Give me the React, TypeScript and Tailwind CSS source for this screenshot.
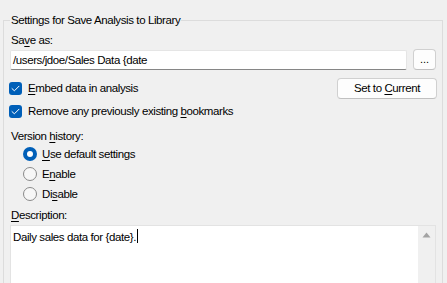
import React from "react";

const font = { fontFamily: '"Liberation Sans", Arial, sans-serif' };

function U({ children }: { children: React.ReactNode }) {
  return <span className="underline underline-offset-[2px] decoration-[1px]">{children}</span>;
}

function Check() {
  return (
    <span className="flex h-[13px] w-[13px] shrink-0 items-center justify-center rounded-[3px] bg-[#005fb8]">
      <svg width="9" height="7" viewBox="0 0 9 7" fill="none">
        <path d="M1 3.6 L3.4 5.8 L8 1.2" stroke="white" strokeWidth="1" strokeLinecap="round" strokeLinejoin="round" />
      </svg>
    </span>
  );
}

function Radio({ on }: { on?: boolean }) {
  return on ? (
    <span className="flex h-[14px] w-[14px] shrink-0 items-center justify-center rounded-full bg-[#005fb8]">
      <span className="h-[6px] w-[6px] rounded-full bg-white" />
    </span>
  ) : (
    <span className="h-[14px] w-[14px] shrink-0 rounded-full border border-[#8a8a8a] bg-[#f7f7f7]" />
  );
}

export default function App() {
  return (
    <div
      className="h-[283px] w-[447px] overflow-hidden bg-[#f0f0f0] pl-[3px] pt-[12px] text-[11.5px] leading-[16px] tracking-[-0.4px] text-black"
      style={font}
    >
      <fieldset className="h-[300px] w-[440px] border border-[#dcdcdc] pl-[6px] pr-[5px]">
        <legend className="px-[1px]">Settings for Save Analysis to Library</legend>
        <div className="mt-[4px] pl-[1px]">
          Sa<U>v</U>e as:
        </div>
        <div className="mt-[1px] flex items-center gap-[6px]">
          <div className="flex h-[20px] w-[397px] items-center rounded-[2px] border border-[#e5e5e5] border-b-[#868686] bg-white pl-[2px]">
            <span>/users/jdoe/Sales Data {"{"}date</span>
          </div>
          <div className="flex h-[21px] w-[23px] items-center justify-center rounded-[4px] border border-[#d0d0d0] border-b-[#c0c0c0] bg-[#fdfdfd] pb-[2px] text-[11px] tracking-normal">
            ...
          </div>
        </div>
        <div className="mt-[8px] flex h-[20px] items-center justify-between">
          <div className="-ml-[1px] flex items-center gap-[6px]">
            <Check />
            <span>
              <U>E</U>mbed data in analysis
            </span>
          </div>
          <div className="flex h-[21px] w-[100px] items-center justify-center rounded-[4px] border border-[#d0d0d0] border-b-[#c0c0c0] bg-[#fdfdfd]">
            <span>
              Set to <U>C</U>urrent
            </span>
          </div>
        </div>
        <div className="mt-[3px] flex h-[20px] items-center">
          <div className="-ml-[1px] flex items-center gap-[6px]">
            <Check />
            <span>
              Remove any previously existing <U>b</U>ookmarks
            </span>
          </div>
        </div>
        <div className="mt-[7px] pl-[1px]">
          Version <U>h</U>istory:
        </div>
        <div className="flex flex-col pl-[13px]">
          <div className="flex h-[20px] items-center gap-[5px]">
            <Radio on />
            <span>
              <U>U</U>se default settings
            </span>
          </div>
          <div className="flex h-[20px] items-center gap-[5px]">
            <Radio />
            <span>
              E<U>n</U>able
            </span>
          </div>
          <div className="flex h-[20px] items-center gap-[5px]">
            <Radio />
            <span>
              Di<U>s</U>able
            </span>
          </div>
        </div>
        <div className="mt-[3px] pl-[1px]">
          <U>D</U>escription:
        </div>
        <div className="mt-[2px] flex h-[80px] w-[426px] border border-[#e3e3e3] bg-white">
          <div className="flex-1 pl-[2px] pt-[1px]">
            Daily sales data for {"{"}date{"}"}.<span className="ml-[1px] inline-block h-[14px] w-[1px] translate-y-[2px] bg-black" />
          </div>
          <div className="flex w-[17px] justify-center bg-[#f0f0f0] pt-[6px]">
            <svg width="9" height="6" viewBox="0 0 9 6">
              <path d="M0.5 5.5 L4.5 0.5 L8.5 5.5 Z" fill="#a3a3a3" />
            </svg>
          </div>
        </div>
      </fieldset>
    </div>
  );
}
